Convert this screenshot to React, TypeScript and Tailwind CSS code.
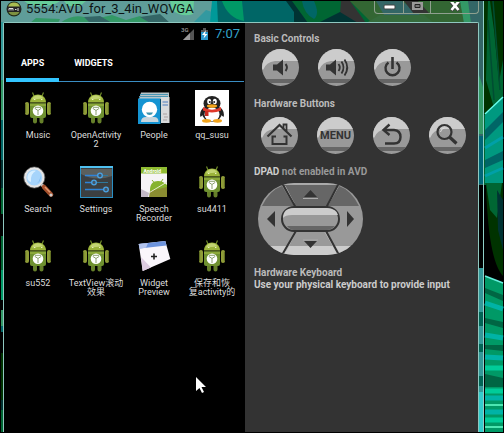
import React, { useState } from 'react';
import clsx from 'clsx';

function AndroidIcon() {
  return (
    <svg viewBox="0 0 34 34" className="size-full">
      <path d="M11.5 1.500 L13 5 M22.5 1.500 L21 5" stroke="#6f8a2a" strokeWidth="1.2" />
      <path d="M9 11.5 C9 6.5 12.5 3.5 17 3.5 S25 6.5 25 11.5 Z" fill="#9bb43a" />
      <path d="M11 8.5 C12.5 5 15 4.3 17 4.3 S21 5 22.5 7.5 Z" fill="#c3d573" />
      <path d="M13 8.5 h1.4 M20 8.5 h1.4" stroke="#e8f0c0" strokeWidth="1.2" />
      <path d="M9 12.5 H25 V25 Q25 27 23 27 H11 Q9 27 9 25 Z" fill="#6f9130" />
      <path d="M9 12.5 H25 V15 H9 Z" fill="#8ba83a" />
      <rect x="4" y="11" width="4" height="13" rx="1.9" fill="#8f9c38" />
      <rect x="26" y="11" width="4" height="13" rx="1.9" fill="#8f9c38" />
      <path d="M4.6 13 V22 M29.4 13 V22" stroke="#5c6b20" strokeWidth="1" />
      <path d="M12 27 h4 v3.5 a2 2 0 0 1 -4 0 Z M18.5 27 h4 v3.5 a2 2 0 0 1 -4 0 Z" fill="#66802a" />
      <circle cx="17" cy="19.7" r="5.3" fill="#fff" />
      <path d="M17 24 V19.5 M17 19.5 L13.7 17.3 M17 19.5 L20.3 17.3 M14 16.3 H20" stroke="#8ba070" strokeWidth="1" fill="none" />
    </svg>
  );
}

function PeopleIcon() {
  return (
    <svg viewBox="0 0 34 34" className="size-full">
      <path d="M4 1.5 H32 V8 H2 Z" fill="#b8c4c8" />
      <path d="M3 3.5 H31 M2 5.5 H31" stroke="#4a97b5" strokeWidth="1" />
      <rect x="24" y="6" width="8.5" height="26" fill="#d8dadb" />
      <path d="M25.5 11 h5.5 M25.5 14 h5.5" stroke="#7b9cc9" strokeWidth="1.6" />
      <path d="M26 23 h4 M27 26 h4 M26 29 h4" stroke="#a9a2a4" strokeWidth="1.2" />
      <rect x="1" y="7.5" width="22.5" height="25.5" fill="#1594d2" />
      <path d="M4 31 Q4 26 9 26 H17 Q21.5 26 21.5 31 Z" fill="#c8d5dc" />
      <circle cx="12.5" cy="18.5" r="7.7" fill="#fff" />
      <path d="M9 21.5 H16 Q15 24 12.5 24 T9 21.5" fill="#3b93ae" />
    </svg>
  );
}

function PenguinIcon() {
  return (
    <svg viewBox="0 0 34 34" className="size-full overflow-visible">
      <rect y="-1" width="34" height="36" fill="#fff" />
      <path d="M8 17 Q4 21 5.5 26 L9 23 M26 17 Q30 21 28.5 26 L25 23" fill="#222" />
      <ellipse cx="17" cy="22" rx="10" ry="9" fill="#222" />
      <ellipse cx="17" cy="12.5" rx="8.5" ry="7.5" fill="#222" />
      <ellipse cx="17" cy="23.5" rx="7.5" ry="7" fill="#fff" />
      <ellipse cx="14.2" cy="10.5" rx="2" ry="2.8" fill="#fff" />
      <ellipse cx="19.8" cy="10.5" rx="2" ry="2.8" fill="#fff" />
      <circle cx="14.8" cy="11" r="1" fill="#222" />
      <circle cx="19.2" cy="11" r="1" fill="#222" />
      <ellipse cx="17" cy="15" rx="5.2" ry="1.8" fill="#f2a41c" />
      <path d="M8 16 Q17 21.5 26 16 V19.5 Q17 23.5 8 19.5 Z" fill="#e03a2c" />
      <path d="M10 20 h3.5 v5 h-3.5 Z" fill="#c92c22" />
      <ellipse cx="11.5" cy="29.8" rx="4.5" ry="1.9" fill="#f2a41c" />
      <ellipse cx="22.5" cy="29.8" rx="4.5" ry="1.9" fill="#f2a41c" />
    </svg>
  );
}

function SearchIcon() {
  return (
    <svg viewBox="0 0 34 34" className="size-full">
      <path d="M20 19 L24 23" stroke="#ddd" strokeWidth="3" />
      <path d="M23 22 L30 29.5" stroke="#a5502c" strokeWidth="4.6" strokeLinecap="round" />
      <path d="M24 22 L29 27.3" stroke="#e39a72" strokeWidth="1.4" />
      <circle cx="30" cy="30" r="1.6" fill="#ccc" />
      <circle cx="13.3" cy="12.5" r="9.2" fill="#a6d4fb" stroke="#e4e4e4" strokeWidth="2.4" />
      <circle cx="13.3" cy="12.5" r="10.6" fill="none" stroke="#777" strokeWidth="0.6" />
      <path d="M6.5 14 A7 7 0 0 1 15 5.8 Q9 9 10 17 Q7.5 16.5 6.5 14Z" fill="#d9efff" />
      <path d="M14 19 Q20 17 19 10 Q21.5 17 14 19" fill="#78b5ee" />
    </svg>
  );
}

function SettingsIcon() {
  return (
    <svg viewBox="0 0 34 34" className="size-full">
      <rect x="1.5" y="1.5" width="32" height="31" fill="#3c3f41" stroke="#2a8fc4" />
      <path d="M2 4 H33 V11 Q17 17 2 9 Z" fill="#5b5f5d" />
      <path d="M1 2 H34" stroke="#4fc0f0" strokeWidth="2" />
      <path d="M6 10.5 H29 M6 17.5 H29" stroke="#2f789c" strokeWidth="1.2" />
      <path d="M6 10.5 H21 M6 17.5 H15 M6 24.5 H27" stroke="#2f83d8" strokeWidth="1.4" />
      <circle cx="21" cy="10.5" r="2.3" fill="#456" stroke="#4aa3e4" strokeWidth="1.3" />
      <circle cx="15" cy="17.5" r="2.3" fill="#456" stroke="#4aa3e4" strokeWidth="1.3" />
      <circle cx="27" cy="24.5" r="2.3" fill="#456" stroke="#4aa3e4" strokeWidth="1.3" />
    </svg>
  );
}

function SpeechIcon() {
  return (
    <svg viewBox="0 0 34 34" className="size-full">
      <rect x="4" y="2" width="26" height="30" fill="#f6f4f6" />
      <rect x="4" y="2" width="26" height="6.5" fill="#8fbb32" />
      <text x="6.5" y="7.5" fontSize="5" fontWeight="bold" fill="#fff" fontFamily="Roboto, sans-serif">Android</text>
      <path d="M13 25 C13 19 16 16 21 16 Q26 16 30 20 V32 H13 Z" fill="#86b32d" />
      <path d="M15 15 L17.5 18 M26 14 L24 17" stroke="#86b32d" strokeWidth="1" />
      <path d="M12 32 L13 26 L30 22 V32 Z" fill="#8a8c31" />
      <path d="M10 29 L30 17" stroke="#e6e9cf" strokeWidth="1" />
      <path d="M4 24 L12 28 L11 32 H4 Z" fill="#c4b9c6" />
    </svg>
  );
}

function WidgetIcon() {
  return (
    <svg viewBox="0 0 34 34" className="size-full">
      <path d="M1.7 5 L28.3 2 L33.3 20 L5.7 32 Z" fill="#faf6fb" />
      <path d="M1.7 5 L28.3 2 L29.5 6.5 L2.7 9.5 Z" fill="#6d93dc" />
      <path d="M1.7 5 L11 4 L9 8.8 L2.7 9.5 Z" fill="#b3c4ee" />
      <path d="M4 18 L5.7 32 L14 28.5 Z" fill="#dccbe0" />
      <path d="M17 14.5 v6 M14 17.5 h6" stroke="#222" strokeWidth="1.6" />
    </svg>
  );
}

const apps = [
  { label: 'Music', Icon: AndroidIcon },
  { label: 'OpenActivity\n2', Icon: AndroidIcon },
  { label: 'People', Icon: PeopleIcon },
  { label: 'qq_susu', Icon: PenguinIcon },
  { label: 'Search', Icon: SearchIcon },
  { label: 'Settings', Icon: SettingsIcon },
  { label: 'Speech\nRecorder', Icon: SpeechIcon },
  { label: 'su4411', Icon: AndroidIcon },
  { label: 'su552', Icon: AndroidIcon },
  { label: 'TextView滚动\n效果', Icon: AndroidIcon },
  { label: 'Widget\nPreview', Icon: WidgetIcon },
  { label: '保存和恢\n复activity的', Icon: AndroidIcon },
];

// Desktop wallpaper, seen beside the window and through its glass frame
function Wallpaper() {
  return (
    <svg viewBox="0 0 504 433" preserveAspectRatio="none" className="absolute inset-0 size-full" aria-hidden="true">
      <rect width="504" height="433" fill="#000" />
      {/* title bar glass */}
      <rect x="1" y="1" width="483" height="22" fill="#006666" />
      <path d="M1 1 H214 L208 23 H1 Z" fill="#5f9d99" />
      <path d="M24 1 H60 Q52 8 30 5 Z M64 1 H86 L80 6 H68 Z M170 1 H194 L193 14 Q182 18 172 10 Z" fill="#66cc99" />
      <path d="M60 23 Q72 14 84 17 T112 15 L126 20 L140 16 L150 23 Z M36 18 L60 19 L58 23 H30 Z" fill="#339966" />
      <path d="M84 17 L100 16 L112 23 H90 Z M140 17 L160 14 L170 23 H150 Z" fill="#336666" />
      <path d="M194 22 L206 10 L212 12 V23 Z" fill="#3399a0" />
      <path d="M212 1 H217 L218 23 H210 Z" fill="#009999" />
      <path d="M222 1 H242 L244 21 Q228 18 222 1 Z" fill="#009966" />
      <path d="M288 1 H360 L372 23 H304 Z" fill="#006633" />
      <path d="M302 1 H314 Q320 14 314 19 Q304 14 302 1 Z" fill="#006666" />
      <path d="M286 1 H292 L308 23 H294 L294 12 Z" fill="#003333" />
      <path d="M341 1 H350 L366 23 H355 L340 14 Z" fill="#333333" />
      <path d="M318 23 L340 12 L358 23 Z" fill="#003333" />
      <path d="M350 1 H460 L466 23 H372 Z" fill="#336633" />
      <path d="M376 1 H402 L420 15 H384 Z" fill="#336666" />
      <path d="M404 1 H418 L430 14 H414 Z" fill="#333333" />
      <path d="M380 15 H424 L434 23 H366 Z" fill="#356b3c" />
      <path d="M462 1 H484 V185 H478 V23 H464 Z" fill="#336666" />
      <path d="M460 1 H468 L471 23 H464 Z" fill="#339966" />
      {/* left edge */}
      <rect x="1" y="22" width="4" height="95" fill="#339999" />
      <rect x="1" y="80" width="4" height="40" fill="#339966" />
      <rect x="1" y="120" width="4" height="75" fill="#006666" />
      <rect x="1" y="160" width="4" height="28" fill="#003333" />
      <rect x="1" y="188" width="4" height="26" fill="#006633" />
      <rect x="1" y="236" width="4" height="34" fill="#006633" />
      <rect x="1" y="270" width="4" height="30" fill="#009966" />
      <rect x="1" y="310" width="4" height="16" fill="#339966" />
      <rect x="1" y="326" width="4" height="6" fill="#006666" />
      <rect x="1" y="353" width="4" height="47" fill="#003300" />
      <rect x="1" y="400" width="4" height="10" fill="#003333" />
      <rect x="1" y="410" width="4" height="22" fill="#006633" />
      {/* right edge */}
      <path d="M479 75 L484 90 V134 H479 Z" fill="#339966" />
      <rect x="479" y="136" width="5" height="48" fill="#006677" />
      <rect x="479" y="185" width="5" height="83" fill="#000" />
      <rect x="479" y="268" width="5" height="164" fill="#339999" />
      <path d="M479 312 h5 v14 h-5 Z M479 344 h5 v8 h-5 Z M479 376 h5 v10 h-5 Z" fill="#006655" />
      <rect x="479" y="392" width="5" height="40" fill="#33cccc" />
      {/* desktop strip */}
      <rect x="484" y="1" width="19" height="184" fill="#006633" />
      <path d="M484 1 H488 L486 80 L494 108 L484 115 Z M490 1 H503 V60 L499 82 L494 30 Z" fill="#003300" />
      <path d="M488 20 L494 100 M493 1 L500 90" stroke="#004d33" strokeWidth="1.5" />
      <path d="M503 97 V183 H485 V115 Z" fill="#009980" />
      <path d="M485 130 L503 112 V122 L485 140 Z M485 160 L503 151 V160 L485 168 Z" fill="#006666" />
      <path d="M485 148 L503 137 M485 176 L503 168" stroke="#00a0a8" strokeWidth="3" />
      <path d="M485 114 L503 97" stroke="#66ffee" strokeWidth="1.5" />
      <path d="M485 183 H503 V276 Q488 260 486 183 Z" fill="#003300" />
      <path d="M486 183 H502 L497 218 L490 210 Z" fill="#006633" />
      <path d="M497 190 L503 200 V250 L498 230 Z" fill="#003333" />
      <path d="M485 276 L503 283 V432 H485 Z" fill="#009966" />
      <path d="M485 288 L503 295 V301 L485 293 Z M485 318 L503 322 V328 L485 323 Z M485 345 H503 V351 L485 349 Z M485 374 L503 378 V387 H485 Z" fill="#006644" />
      <path d="M485 303 L503 309 M485 335 L503 338 M485 357 L503 358 M485 398 H503 M485 412 H503" stroke="#00b3a6" strokeWidth="5" />
      <path d="M485 368 H503 M485 391 H503 M485 420 H503" stroke="#00cc99" strokeWidth="5" />
      <path d="M485 405 H503 M485 427 H503" stroke="#66ffcc" strokeWidth="1.5" />
      <path d="M485 276 L503 283" stroke="#66eedd" strokeWidth="1.5" />
    </svg>
  );
}

function TitleBar() {
  return (
    <header className="flex h-[21px] items-start justify-between pl-[5px] pr-1">
      <div className="flex items-center gap-1">
        <svg viewBox="0 0 16 16" className="size-4" aria-hidden="true">
          <circle cx="8" cy="8" r="7.5" fill="#222b18" />
          <path d="M2 6 A6.300 6.300 0 0 1 14 6 Z" fill="#a8bd51" />
          <path d="M2.5 11 H13.5 A6.300 6.300 0 0 1 2.5 11 Z" fill="#7d9140" />
          <rect x="1" y="5.5" width="14" height="5.5" fill="#242424" />
          <path d="M3 9.5 V7.5 H7 V9.5 M5 7.5 V9.5 M9 8.5 H10.5 M12 7 V10" stroke="#ddd" fill="none" />
        </svg>
        <h1 className="text-[13px] leading-4 text-[#0c1414]">5554:AVD_for_3_4in_WQVGA</h1>
      </div>
      <div className="flex h-[13px] overflow-hidden rounded-b-[4px] border border-t-0 border-[#8fa08f]">
        <button type="button" aria-label="Minimize" className="grid w-[29px] place-items-center border-r border-[#8fa08f]">
          <svg viewBox="0 0 13 8" className="h-2 w-[13px]"><rect x="1" y="2" width="11" height="4" rx="1" fill="#fff" stroke="#444" /></svg>
        </button>
        <button type="button" aria-label="Maximize" className="grid w-[27px] place-items-center border-r border-[#8fa08f]">
          <svg viewBox="0 0 13 10" className="h-[10px] w-[13px]"><path d="M1 0 H12 V8 H1 Z" fill="#999" /><path d="M4 2.5 H9 V5.5 H4 Z" fill="#777" stroke="#222" /></svg>
        </button>
        <button type="button" aria-label="Close" className="grid w-[47px] place-items-center">
          <svg viewBox="0 0 12 10" className="h-[10px] w-3"><path d="M2 0 L10 8.5 M10 0 L2 8.5" stroke="#444" strokeWidth="4" /><path d="M2 -1 L9.5 8 M10 -1 L2.5 8" stroke="#fff" strokeWidth="2.6" /></svg>
        </button>
      </div>
    </header>
  );
}

function StatusBar() {
  return (
    <div className="flex h-[22px] items-center justify-end pr-[5px]">
      <svg viewBox="0 0 30 16" className="mr-1 h-4 w-[30px]" role="img" aria-label="3G signal, charging">
        <text x="0" y="6" fontSize="6" fontWeight="bold" fill="#888" fontFamily="Roboto, sans-serif">3G</text>
        <path d="M2 14 L13 3 V14 Z" fill="#555" />
        <path d="M2 14 L9 7 V14 Z" fill="#9a9a9a" />
        <path d="M20 4 H22 V2 H25 V4 H27 V14 H20 Z" fill="#2b98cc" />
        <path d="M20 4 H22 V2 H25 V4 H27 V6 H20 Z" fill="#555" />
        <path d="M25 4 L21 9 H23.5 L22.5 12.5 L26.5 8 H24 Z" fill="#fff" />
      </svg>
      <time className="text-[13px] leading-4 text-[#33a5cc]">7:07</time>
    </div>
  );
}

function Launcher() {
  const [tab, setTab] = useState('APPS');

  return (
    <section aria-label="Device screen" className="min-w-0 flex-[241] bg-black">
      <StatusBar />
      <div role="tablist" className="mx-px ml-0.5 flex h-[37px] border-b border-[#3a8ec4]">
        {['APPS', 'WIDGETS'].map((name) => (
          <button
            key={name}
            type="button"
            role="tab"
            aria-selected={tab === name}
            onClick={() => setTab(name)}
            className={clsx(
              '-mb-px border-b-4 px-[15px] pt-0.5 text-[9px] leading-3 font-bold text-white',
              tab === name ? 'border-[#33c5ff]' : 'border-transparent'
            )}
          >
            {name}
          </button>
        ))}
      </div>
      <div className="grid auto-rows-[74px] grid-cols-4 px-[5px] pt-[9px] pr-1">
        {apps.map(({ label, Icon }) => (
          <button key={label} type="button" className="flex flex-col items-center gap-[6px]">
            <span className="block size-[34px] shrink-0">
              <Icon />
            </span>
            <span className="text-[9px] leading-[9px] whitespace-pre text-[#ddd]">{label}</span>
          </button>
        ))}
      </div>
    </section>
  );
}

function RoundButton({ label, children }: { label: string; children: React.ReactNode }) {
  return (
    <button type="button" aria-label={label} className="relative size-[37px] shrink-0 overflow-hidden rounded-full bg-[#999]">
      <svg viewBox="0 0 37 37" className="absolute inset-0 size-full" aria-hidden="true">
        <path d="M0 0 H37 V12 H13 Q4 13 1 21 L0 20 Z" fill="#ccc" />
        <rect y="30" width="37" height="4" fill="#666" />
      </svg>
      <span className="relative grid size-full place-items-center">{children}</span>
    </button>
  );
}

function Glyph({ children }: { children: React.ReactNode }) {
  return (
    <svg viewBox="0 0 37 37" className="size-full" fill="none" stroke="#333" strokeWidth="2" aria-hidden="true">
      {children}
    </svg>
  );
}

function Dpad() {
  return (
    <svg viewBox="0 0 105 72" className="h-[72px] w-[105px]" role="img" aria-label="DPAD">
      <clipPath id="pad">
        <rect width="105" height="72" rx="36" />
      </clipPath>
      <g clipPath="url(#pad)">
        <rect width="105" height="72" fill="#999" />
        <path d="M4 23 Q12 7 24 3 L36 23 Z M101 23 Q93 7 81 3 L69 23 Z" fill="#666" />
        <path d="M26 2 H80 L69 25 H37 Z" fill="#666" />
        <path d="M0 63 H105 V72 H0 Z" fill="#ccc" />
        <path d="M26 1 H79 M27 3 L36 20 M28 68 L38 49 M78 68 L67 49 M70 22 L80 4" stroke="#bbb" fill="none" />
        <path d="M24 0 L38 25 M81 0 L68 25 M24 72 L38 48 M81 72 L68 48" stroke="#333" strokeWidth="2" />
      </g>
      <rect x="24" y="24" width="57" height="24" rx="12" fill="#999" stroke="#333" strokeWidth="2" />
      <path d="M25 35 Q25 25 36 25 H69 Q79 26 80 32 H34 Q27 32 25 35 Z" fill="#ccc" />
      <path d="M29 43 H77 Q73 47 69 47 H36 Q32 47 29 43 Z" fill="#666" />
      <path d="M46 14 L52.5 7 L59 14 Z M9 36 L17 28 V44 Z M96 36 L89 28 V44 Z M46 58 L52.5 65 L59 58 Z" fill="#333" />
      <path d="M45 15.5 H60 M45 57 H60" stroke="#aaa" strokeWidth="1" />
    </svg>
  );
}

function Controls() {
  return (
    <section aria-label="Emulator controls" className="min-w-0 flex-[224] bg-[#333] pt-[10px] pl-[9px] text-[10px] leading-3 font-bold text-[#bbb]">
      <h2>Basic Controls</h2>
      <div className="mt-1 flex gap-[19px] pl-2">
        <RoundButton label="Volume down">
          <Glyph>
            <path d="M11 15.5 H15 L21 10.5 V26.5 L15 21.5 H11 Z" fill="#333" stroke="none" />
            <path d="M23.5 15 Q26.5 18.5 23.5 22" />
          </Glyph>
        </RoundButton>
        <RoundButton label="Volume up">
          <Glyph>
            <path d="M8 15.5 H12 L18 10.5 V26.5 L12 21.5 H8 Z" fill="#333" stroke="none" />
            <path d="M20.5 15 Q23 18.5 20.5 22 M23.5 12.5 Q27.5 18.5 23.5 24.5 M26.5 10.5 Q32 18.5 26.5 26.5" strokeWidth="1.8" />
          </Glyph>
        </RoundButton>
        <RoundButton label="Power">
          <Glyph>
            <path d="M18.5 8 V20" strokeWidth="2.6" />
            <path d="M14.5 13.5 A7 7 0 1 0 22.5 13.5" strokeWidth="2.4" />
          </Glyph>
        </RoundButton>
      </div>

      <h2 className="mt-3">Hardware Buttons</h2>
      <div className="mt-[7px] flex gap-[19px] pl-[7px]">
        <RoundButton label="Home">
          <Glyph>
            <path d="M6.5 19.5 L18.5 8 L30.5 19.5" strokeWidth="2.2" />
            <path d="M22.5 11.5 V7.5 H25.5 V14" strokeWidth="1.8" />
            <path d="M15 19.5 H11.5 V27 H25.5 V19.5 H22.5" />
          </Glyph>
        </RoundButton>
        <RoundButton label="Menu">
          <span className="text-[11px] leading-none text-[#333]">MENU</span>
        </RoundButton>
        <RoundButton label="Back">
          <Glyph>
            <path d="M16.5 7.5 L10.5 13 L16.5 18" strokeWidth="2.4" />
            <path d="M11 13 H21 Q27.5 13.5 27.5 20 T21 26.5 H12" strokeWidth="2.4" />
          </Glyph>
        </RoundButton>
        <RoundButton label="Search">
          <Glyph>
            <circle cx="15.5" cy="15" r="7" strokeWidth="2.2" />
            <path d="M20.5 20 L27.5 26.5" strokeWidth="3.2" />
            <path d="M11.5 15 Q12 11.5 15.5 11" stroke="#ddd" strokeWidth="1" />
          </Glyph>
        </RoundButton>
      </div>

      <h2 className="mt-3 text-[#ccc]">
        DPAD <span className="text-[#999]">not enabled in AVD</span>
      </h2>
      <div className="mt-[5px] pl-1">
        <Dpad />
      </div>

      <h2 className="mt-3">Hardware Keyboard</h2>
      <p className="whitespace-nowrap text-[#ccc]">Use your physical keyboard to provide input</p>
    </section>
  );
}

export default function App() {
  return (
    <div className="relative flex min-h-screen bg-black p-px font-[Roboto,Noto_Sans_CJK_SC,sans-serif]">
      <Wallpaper />
      <main className="relative mr-[19px] flex min-w-0 flex-1 flex-col border-r border-[#8fd0c8]">
        <TitleBar />
        <div className="mr-1 ml-0.5 flex flex-1 rounded-t-[2px] border border-b-0 border-[#8fc8c0]">
          <Launcher />
          <Controls />
        </div>
      </main>
      <svg viewBox="0 0 12 18" className="pointer-events-none absolute top-[376px] left-[195px] h-[18px] w-3" aria-hidden="true">
        <path d="M1 1 V15 L4.5 12 L7 17 L9 16 L6.5 11 H11 Z" fill="#fff" />
      </svg>
    </div>
  );
}
